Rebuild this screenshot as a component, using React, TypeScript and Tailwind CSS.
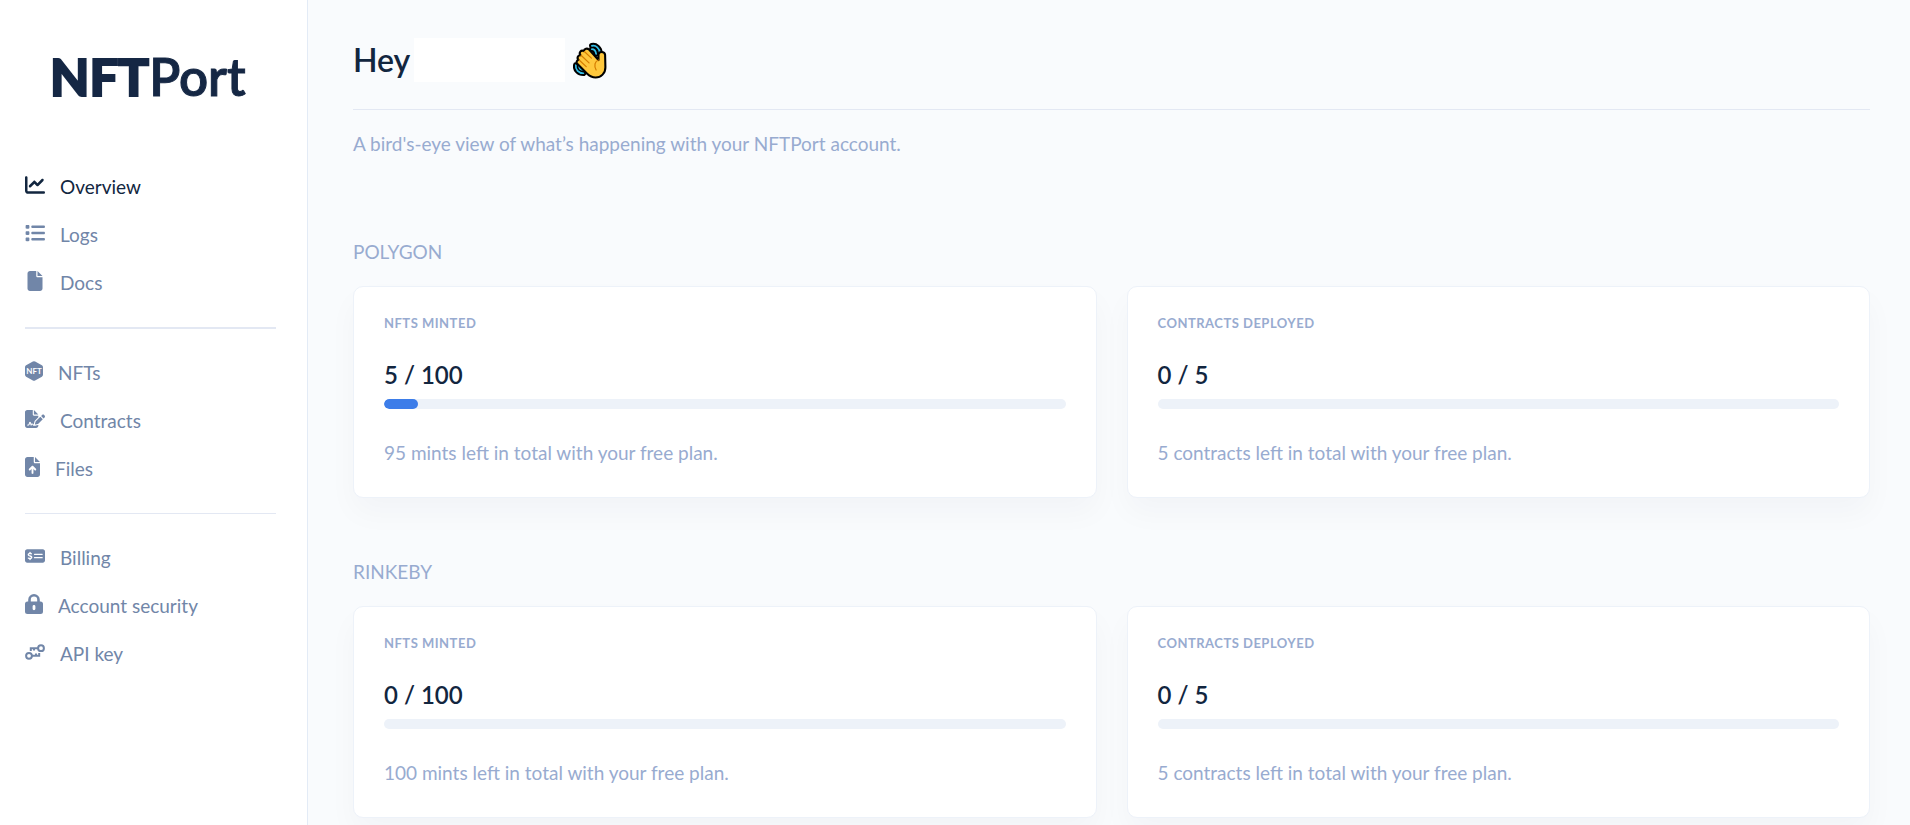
import type { ReactNode } from "react";
import {
  FaChartLine,
  FaFile,
  FaFileArrowUp,
  FaFileSignature,
  FaList,
  FaMoneyCheckDollar,
} from "react-icons/fa6";

function NftIcon() {
  return (
    <svg width="18" height="20" viewBox="0 0 18 20" aria-hidden="true">
      <path
        d="M7.9.5a2.2 2.2 0 0 1 2.2 0l6.8 3.8A2.2 2.2 0 0 1 18 6.2v7.6a2.2 2.2 0 0 1-1.100 1.900l-6.800 3.800a2.200 2.200 0 0 1-2.200 0L1.100 15.700A2.200 2.200 0 0 1 0 13.800V6.200a2.200 2.200 0 0 1 1.100-1.900z"
        fill="currentColor"
      />
      <text
        x="9"
        y="13"
        textAnchor="middle"
        fontFamily="'Liberation Sans Narrow', 'Lato', sans-serif"
        fontSize="8"
        fontWeight="700"
        fill="#fff"
      >
        NFT
      </text>
    </svg>
  );
}

function LockIcon() {
  return (
    <svg width="18" height="20" viewBox="0 0 18 20" aria-hidden="true">
      <path
        fill="currentColor"
        fillRule="evenodd"
        d="M3.200 7.600V5.800a5.800 5.800 0 0 1 11.600 0v1.800h.7A2.500 2.500 0 0 1 18 10.100v7.400a2.500 2.500 0 0 1-2.500 2.500h-13A2.500 2.500 0 0 1 0 17.500v-7.400a2.500 2.500 0 0 1 2.500-2.500zm2.600 0h6.400V5.800a3.200 3.200 0 0 0-6.400 0zM9 11a1.400 1.400 0 0 0-1.400 1.400v2.400a1.400 1.400 0 0 0 2.800 0v-2.400A1.400 1.400 0 0 0 9 11z"
      />
    </svg>
  );
}

function KeysIcon() {
  return (
    <svg width="20" height="16" viewBox="0 0 20 16" fill="none" stroke="currentColor" strokeWidth="2" aria-hidden="true">
      <circle cx="16" cy="4.200" r="2.900" />
      <path d="M13.200 4.200H5.800v2.800M9 4.200v2.200" />
      <circle cx="4" cy="11.800" r="2.900" />
      <path d="M6.800 11.800H14.200V9M11 11.800V9.600" />
    </svg>
  );
}

function WaveIcon() {
  return (
    <svg width="34" height="37" viewBox="0 0 36 38" fill="none" strokeLinecap="round" strokeLinejoin="round" role="img" aria-label="Waving hand">
      <g stroke="#000" strokeWidth="6">
        <path d="M20 3.500c4-1 8.500 2.500 8.500 8M20 7c2.500 0 4 2 4.500 5" />
        <path d="M3 24c-.8 4.500 3 8.500 8 8.500M6.500 25c0 2.500 2 4 5 4" />
      </g>
      <g stroke="#35bfe8" strokeWidth="1.800">
        <path d="M20 3.500c4-1 8.500 2.500 8.500 8M20 7c2.500 0 4 2 4.500 5" />
        <path d="M3 24c-.8 4.500 3 8.500 8 8.500M6.500 25c0 2.500 2 4 5 4" />
      </g>
      <path
        d="M27 18.500v-5.500c0-4 6.500-4 7 0l.3 13c.2 6.500-4.800 11-10.300 11-4 0-6.500-1.500-9-4L4.500 22.500c-1.500-1.500-.5-4 1.500-4-2.500-2.200-.5-5.500 2-5-2.300-3 .5-6 3.500-4.500C12 6.500 15 5.500 17 7.500z"
        fill="#ffc83d"
        stroke="#000"
        strokeWidth="2.200"
      />
      <path d="M6.500 18.500l7.500 7M8.500 13.500l8.500 8M12 9.500l7.500 7M27 18.500c-4 1.500-5 6-2.500 10.500" stroke="#d67d00" strokeWidth="1.300" />
    </svg>
  );
}

type Item = { label: string; icon: ReactNode; active?: boolean };

const groups: Item[][] = [
  [
    { label: "Overview", icon: <FaChartLine size={20} />, active: true },
    { label: "Logs", icon: <FaList size={20} /> },
    { label: "Docs", icon: <span className="flex w-5 justify-center"><FaFile size={20} className="w-4" /></span> },
  ],
  [
    { label: "NFTs", icon: <NftIcon /> },
    { label: "Contracts", icon: <FaFileSignature className="h-[18px] w-5" /> },
    { label: "Files", icon: <FaFileArrowUp className="h-5 w-[15px]" /> },
  ],
  [
    { label: "Billing", icon: <FaMoneyCheckDollar className="h-5 w-5" /> },
    { label: "Account security", icon: <LockIcon /> },
    { label: "API key", icon: <KeysIcon /> },
  ],
];

function Sidebar() {
  return (
    <aside className="w-[308px] shrink-0 border-r border-[#e3ebf6] bg-white pr-[31px] pl-[25px]">
      <a href="#" className="flex h-[163px] items-start pt-[46px] pl-[25px] text-[51px] leading-[62px] text-[#152744]">
        <span className="font-black [-webkit-text-stroke:2px_currentColor]">NFT</span>
        <span className="font-semibold [-webkit-text-stroke:1px_currentColor]">Port</span>
      </a>
      <nav>
        {groups.map((group, i) => (
          <ul
            key={i}
            className="border-[#e3e8f3] pt-5 pb-5 first:border-b-2 first:pt-0 last:border-t"
          >
            {group.map((item) => (
              <li key={item.label}>
                <a
                  href="#"
                  aria-current={item.active ? "page" : undefined}
                  className={
                    item.active
                      ? "flex h-12 items-center gap-[15px] text-[19px] text-[#12263f]"
                      : "flex h-12 items-center gap-[15px] text-[19px] text-[#7186a8]"
                  }
                >
                  <span className="pb-1">{item.icon}</span>
                  {item.label}
                </a>
              </li>
            ))}
          </ul>
        ))}
      </nav>
    </aside>
  );
}

type Stat = { title: string; used: number; total: number; note: string };

function StatCard({ title, used, total, note }: Stat) {
  return (
    <article className="flex-1 rounded-[10px] border border-[#edf2f9] bg-white px-[30px] pt-[26px] pb-[30px] shadow-[0_15px_30px_rgba(18,38,63,0.03)]">
      <h3 className="text-[13px] leading-5 font-bold tracking-[0.5px] text-[#98abd0] uppercase">{title}</h3>
      <p className="mt-[26px] text-2xl leading-8 font-semibold text-[#12263f]">
        {used} / {total}
      </p>
      <div className="mt-2 h-[10px] overflow-hidden rounded-full bg-[#edf2f9]">
        <div className="h-full rounded-full bg-[#3d7de9]" style={{ width: `${(used / total) * 100}%` }} />
      </div>
      <p className="mt-[30px] text-[19px] leading-7 text-[#98abd0]">{note}</p>
    </article>
  );
}

const networks: { name: string; stats: Stat[] }[] = [
  {
    name: "Polygon",
    stats: [
      { title: "NFTs minted", used: 5, total: 100, note: "95 mints left in total with your free plan." },
      { title: "Contracts deployed", used: 0, total: 5, note: "5 contracts left in total with your free plan." },
    ],
  },
  {
    name: "Rinkeby",
    stats: [
      { title: "NFTs minted", used: 0, total: 100, note: "100 mints left in total with your free plan." },
      { title: "Contracts deployed", used: 0, total: 5, note: "5 contracts left in total with your free plan." },
    ],
  },
];

export default function App() {
  return (
    <div className="flex h-screen overflow-hidden bg-[#f9fbfd] font-['Lato',sans-serif]">
      <Sidebar />
      <main className="min-w-0 flex-1 overflow-hidden pr-10 pl-[45px]">
        <header className="flex h-[110px] items-center border-b border-[#e3e8f3] pt-[11px]">
          <h1 className="text-[32px] leading-10 font-semibold text-[#12263f]">Hey</h1>
          <span className="ml-1 h-11 w-[151px] bg-white" />
          <span className="ml-2">
            <WaveIcon />
          </span>
        </header>
        <p className="pt-5 text-[19px] leading-7 text-[#98abd0]">
          A bird's-eye view of what’s happening with your NFTPort account.
        </p>
        <div className="mt-20 flex flex-col gap-[60px]">
          {networks.map((network) => (
            <section key={network.name}>
              <h2 className="text-[19px] leading-7 text-[#98abd0] uppercase">{network.name}</h2>
              <div className="mt-5 flex gap-[30px]">
                {network.stats.map((stat) => (
                  <StatCard key={stat.title} {...stat} />
                ))}
              </div>
            </section>
          ))}
        </div>
      </main>
    </div>
  );
}
